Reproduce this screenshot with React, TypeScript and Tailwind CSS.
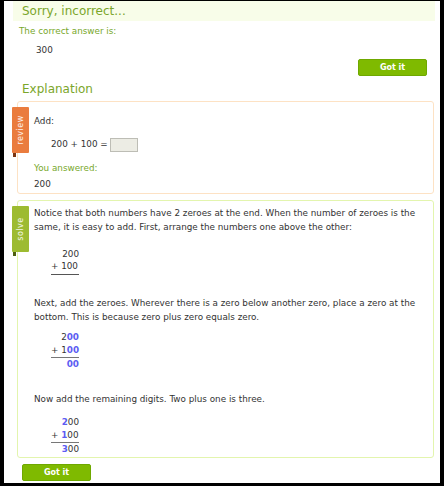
import { type ReactNode } from "react";

const font = { fontFamily: '"DejaVu Sans", Verdana, sans-serif' };

function GotIt() {
  return (
    <button className="h-[17px] w-[69px] rounded-[2px] border border-[#6fa800] bg-[#7fba00] text-[8px] font-bold text-white">
      Got it
    </button>
  );
}

function Ribbon({ label, color, fold }: { label: string; color: string; fold: string }) {
  return (
    <div className="absolute left-[-6px] top-[5px]">
      <div className={`flex h-[46px] w-[17px] items-center justify-center rounded-[1px] ${color}`}>
        <span className="-rotate-90 text-[8px] leading-none tracking-[0.5px] text-white/90">{label}</span>
      </div>
      <div className={`ml-[1px] h-[4px] w-[3px] ${fold}`} />
    </div>
  );
}

function Line({ children, className = "" }: { children: ReactNode; className?: string }) {
  return <div className={`whitespace-nowrap ${className}`}>{children}</div>;
}

const B = ({ children }: { children: ReactNode }) => (
  <span className="font-bold text-[#5c5cf2]">{children}</span>
);

export default function App() {
  return (
    <div className="bg-black pb-[3px] pl-[4px] pr-[4px] pt-[1px]" style={font}>
      <div className="h-[482px] bg-white text-[8.8px] text-[#333]">
        {/* header */}
        <div className="ml-[9px] mr-[5px] flex h-[20px] items-center bg-[#f8fde9] pl-[9px] text-[12px] text-[#7ba62b]">
          Sorry, incorrect...
        </div>
        <div className="ml-[15px] mt-[4px] text-[#78a82c]">The correct answer is:</div>
        <div className="ml-[32px] mt-[6px]">300</div>
        <div className="mr-[13px] mt-[2px] flex justify-end">
          <GotIt />
        </div>
        <div className="ml-[18px] mt-[4px] text-[12px] text-[#7ba62b]">Explanation</div>

        {/* review */}
        <div className="relative ml-[13px] mr-[6px] mt-[3px] h-[93px] rounded-[3px] border border-[#fde2c4] pl-[16px] pt-[13px]">
          <Ribbon label="review" color="bg-[#ea7c3e]" fold="bg-[#7a3512]" />
          <div>Add:</div>
          <div className="ml-[17px] mt-[9px] flex items-center gap-[2px]">
            <span>200 + 100 =</span>
            <span className="h-[14px] w-[28px] border border-[#bdbdb5] bg-[#ecece4]" />
          </div>
          <div className="mt-[10px] text-[#78a82c]">You answered:</div>
          <div className="mt-[3px]">200</div>
        </div>

        {/* solve */}
        <div className="relative ml-[13px] mr-[6px] mt-[6px] h-[258px] rounded-[3px] border border-[#e3f5ae] pl-[16px] pt-[5px] leading-[14px]">
          <Ribbon label="solve" color="bg-[#9dbb31]" fold="bg-[#4d5e10]" />
          <Line>
            Notice that both numbers have 2 zeroes at the end. When the number of zeroes is the
          </Line>
          <Line>same, it is easy to add. First, arrange the numbers one above the other:</Line>

          <div className="ml-[17px] mt-[14px] w-[28px] text-right leading-[12px]">
            <div>200</div>
            <div className="border-b border-[#555] pb-[2px] text-left">+ 100</div>
          </div>

          <Line className="mt-[21px]">
            Next, add the zeroes. Wherever there is a zero below another zero, place a zero at the
          </Line>
          <Line>bottom. This is because zero plus zero equals zero.</Line>

          <div className="ml-[17px] mt-[7px] w-[28px] text-right leading-[13px]">
            <div>
              2<B>00</B>
            </div>
            <div className="border-b border-[#777] text-left">
              + 1<B>00</B>
            </div>
            <div>
              <B>00</B>
            </div>
          </div>

          <Line className="mt-[21px]">Now add the remaining digits. Two plus one is three.</Line>

          <div className="ml-[17px] mt-[10px] w-[28px] text-right leading-[13px]">
            <div>
              <B>2</B>00
            </div>
            <div className="border-b border-[#777] text-left">
              + <B>1</B>00
            </div>
            <div>
              <B>3</B>00
            </div>
          </div>
        </div>

        <div className="ml-[18px] mt-[6px]">
          <GotIt />
        </div>
      </div>
    </div>
  );
}
